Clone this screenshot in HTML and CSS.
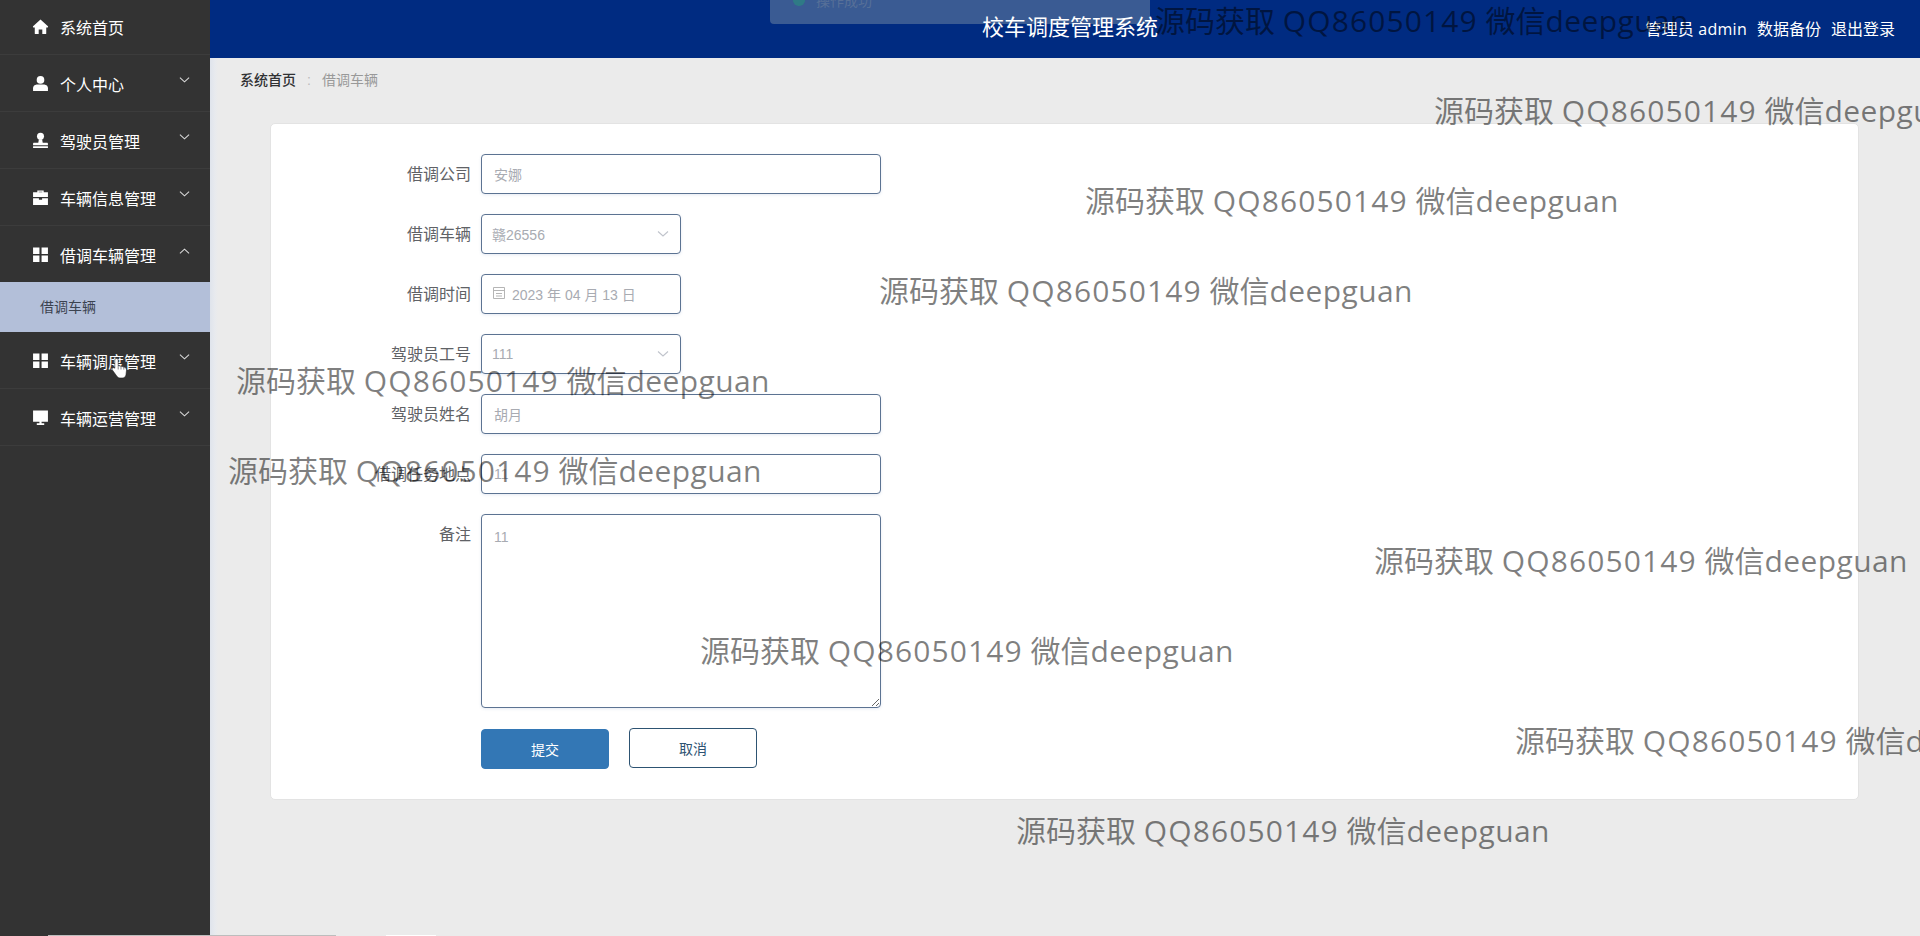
FILE: index.html
```html
<!DOCTYPE html>
<html lang="zh-CN">
<head>
<meta charset="utf-8">
<title>校车调度管理系统</title>
<link rel="stylesheet" href="styles.css">
</head>
<body>
<div class="app">
  <aside class="sidebar">
    <ul class="menu">
      <li class="menu-item">
        <svg class="menu-icon" viewBox="0 0 16 16"><path d="M8 1.500 1 7.800c-.4.5 0 1.200.6 1.200h1v5.500c0 .3.200.5.500.5h3.200v-4.200h3.400V15h3.200c.3 0 .5-.2.500-.5V9h1c.6 0 1-.7.6-1.200z"/></svg>
        <span class="menu-text">系统首页</span>
      </li>
      <li class="menu-item">
        <svg class="menu-icon" viewBox="0 0 16 16"><circle cx="8" cy="4.600" r="3.600"/><path d="M1 15v-2.600C1 10 3.400 9 5 9h6c1.600 0 4 1 4 3.400V15z"/></svg>
        <span class="menu-text">个人中心</span>
        <svg class="chevron" viewBox="0 0 12 8"><path d="M1 1.500 6 6l5-4.500"/></svg>
      </li>
      <li class="menu-item">
        <svg class="menu-icon" viewBox="0 0 16 16"><circle cx="8" cy="4" r="3.300"/><path d="M6.500 6.800h3l.6 3.200H14c.7 0 1 .5 1 1v1.500H1V11c0-.5.3-1 1-1h3.900zM1 13.500h14V15H1z"/></svg>
        <span class="menu-text">驾驶员管理</span>
        <svg class="chevron" viewBox="0 0 12 8"><path d="M1 1.500 6 6l5-4.500"/></svg>
      </li>
      <li class="menu-item">
        <svg class="menu-icon" viewBox="0 0 16 16"><path d="M5 3V1.500h6V3h4v4.500H1V3zm1.300 0h3.400v-.4H6.300zM1 8.700h5.500v1.300h3V8.700H15V15H1z"/></svg>
        <span class="menu-text">车辆信息管理</span>
        <svg class="chevron" viewBox="0 0 12 8"><path d="M1 1.500 6 6l5-4.500"/></svg>
      </li>
      <li class="menu-item">
        <svg class="menu-icon" viewBox="0 0 16 16"><path d="M1 1.500h6v6H1zM9 1.500h6v6H9zM1 9h6v6H1zM9 9h6v6H9z"/></svg>
        <span class="menu-text">借调车辆管理</span>
        <svg class="chevron" viewBox="0 0 12 8"><path d="M1 6.500 6 2l5 4.500"/></svg>
      </li>
      <li class="submenu-item">借调车辆</li>
      <li class="menu-item">
        <svg class="menu-icon" viewBox="0 0 16 16"><path d="M1 1.500h6v6H1zM9 1.500h6v6H9zM1 9h6v6H1zM9 9h6v6H9z"/></svg>
        <span class="menu-text">车辆调度管理</span>
        <svg class="chevron" viewBox="0 0 12 8"><path d="M1 1.500 6 6l5-4.500"/></svg>
      </li>
      <li class="menu-item">
        <svg class="menu-icon" viewBox="0 0 16 16"><path d="M1 1.500h14V12H9v1.300h2.500V15h-7v-1.700H7V12H1z"/></svg>
        <span class="menu-text">车辆运营管理</span>
        <svg class="chevron" viewBox="0 0 12 8"><path d="M1 1.500 6 6l5-4.500"/></svg>
      </li>
    </ul>
  </aside>

  <main class="main">
    <header class="topbar">
      <h1 class="title">校车调度管理系统</h1>
      <nav class="user-links">
        <span class="user-name">管理员 admin</span>
        <span>数据备份</span>
        <span>退出登录</span>
      </nav>
    </header>

    <div class="breadcrumb">
      <span class="crumb-home">系统首页</span>
      <span class="crumb-sep">:</span>
      <span class="crumb-current">借调车辆</span>
    </div>

    <form class="card">
      <div class="form-row">
        <label class="form-label">借调公司</label>
        <input class="control wide" value="安娜" readonly>
      </div>
      <div class="form-row">
        <label class="form-label">借调车辆</label>
        <div class="control narrow select"><span>赣26556</span><svg class="select-arrow" viewBox="0 0 12 8"><path d="M1 1.500 6 6l5-4.500"/></svg></div>
      </div>
      <div class="form-row">
        <label class="form-label">借调时间</label>
        <div class="control narrow date">
          <svg class="date-icon" viewBox="0 0 14 14"><path d="M1.500 1.500h11v11h-11zM1.500 4.500h11M4 7.500h6M4 10h6"/></svg>
          <span>2023 年 04 月 13 日</span>
        </div>
      </div>
      <div class="form-row">
        <label class="form-label">驾驶员工号</label>
        <div class="control narrow select"><span>111</span><svg class="select-arrow" viewBox="0 0 12 8"><path d="M1 1.500 6 6l5-4.500"/></svg></div>
      </div>
      <div class="form-row">
        <label class="form-label">驾驶员姓名</label>
        <input class="control wide" value="胡月" readonly>
      </div>
      <div class="form-row">
        <label class="form-label">借调任务地点</label>
        <input class="control wide" value="11" readonly>
      </div>
      <div class="form-row">
        <label class="form-label">备注</label>
        <textarea class="control wide note" readonly>11</textarea>
      </div>
      <div class="form-actions">
        <button type="button" class="btn btn-primary">提交</button>
        <button type="button" class="btn btn-ghost">取消</button>
      </div>
    </form>
  </main>
</div>

<div class="toast">
  <svg class="toast-icon" viewBox="0 0 16 16"><circle cx="8" cy="8" r="7"/></svg>
  <span>操作成功</span>
</div>

<svg class="hand-cursor" viewBox="0 0 18 22"><path d="M5.500 1.500c1 0 1.700.7 1.700 1.700v5.300l6 1.600c1.500.4 2.300 1.500 2.300 3l-.5 4.500c-.2 2-1.500 3.400-3.700 3.400H8.800c-1.200 0-2-.5-2.700-1.400L1.500 13.200c-.6-.8-.5-1.700.2-2.200.7-.5 1.500-.4 2.100.3V3.200c0-1 .7-1.700 1.700-1.700z"/><path class="hand-lines" d="M7.200 8.500v4M10 9.200v3.300M12.800 10v2.600"/></svg>

<div class="scroll-edge"><span class="scroll-thumb"></span><span class="scroll-mark"></span></div>

<div class="watermarks">
  <span class="wm wm-1">源码获取 <span class="wm-qq">QQ86050149</span> 微信<span class="wm-id">deepguan</span></span>
  <span class="wm wm-2">源码获取 <span class="wm-qq">QQ86050149</span> 微信<span class="wm-id">deepguan</span></span>
  <span class="wm wm-3">源码获取 <span class="wm-qq">QQ86050149</span> 微信<span class="wm-id">deepguan</span></span>
  <span class="wm wm-4">源码获取 <span class="wm-qq">QQ86050149</span> 微信<span class="wm-id">deepguan</span></span>
  <span class="wm wm-5">源码获取 <span class="wm-qq">QQ86050149</span> 微信<span class="wm-id">deepguan</span></span>
  <span class="wm wm-6">源码获取 <span class="wm-qq">QQ86050149</span> 微信<span class="wm-id">deepguan</span></span>
  <span class="wm wm-7">源码获取 <span class="wm-qq">QQ86050149</span> 微信<span class="wm-id">deepguan</span></span>
  <span class="wm wm-8">源码获取 <span class="wm-qq">QQ86050149</span> 微信<span class="wm-id">deepguan</span></span>
  <span class="wm wm-9">源码获取 <span class="wm-qq">QQ86050149</span> 微信<span class="wm-id">deepguan</span></span>
  <span class="wm wm-10">源码获取 <span class="wm-qq">QQ86050149</span> 微信<span class="wm-id">deepguan</span></span>
</div>
</body>
</html>
```
FILE: styles.css
```css
* { box-sizing: border-box; }
html, body { margin: 0; height: 100%; overflow: hidden; }
body {
  font-family: "Liberation Sans", "Noto Sans CJK SC", sans-serif;
  background: #ebebeb;
  color: #333;
}
.app { display: flex; height: 936px; }

/* sidebar */
.sidebar { width: 210px; flex: none; background: #333; overflow: hidden; }
.menu { list-style: none; margin: -2px 0 0; padding: 0; }
.menu-item {
  height: 57px;
  display: flex;
  align-items: center;
  padding: 2px 20px 0 32px;
  border-bottom: 1px solid #3c3c3c;
  color: #fff;
  font-size: 16px;
}
.menu-icon { width: 17px; height: 17px; fill: #fff; flex: none; margin-top: -2px; }
.menu-text { margin-left: 11px; flex: 1; }
.chevron { width: 11px; height: 8px; fill: none; stroke: #ddd; stroke-width: 1.100; margin-top: -8px; flex: none; }
.submenu-item {
  height: 50px;
  margin-top: -1px;
  line-height: 50px;
  padding-left: 40px;
  background: #b3bfd9;
  color: #3c4350;
  font-size: 14px;
}

/* main */
.main {
  flex: 1;
  min-width: 0;
  display: flex;
  flex-direction: column;
  background: linear-gradient(90deg, #dfe4ec 0, #e8eaee 5px, #ebebeb 8px);
}
.topbar {
  height: 58px;
  flex: none;
  display: flex;
  align-items: center;
  padding: 0 25px 0 772px;
  background: #002b81;
  color: #fff;
}
.title { position: relative; z-index: 1; margin: -2px 0 0; font-size: 22px; font-weight: 400; line-height: 1; }
.user-links {
  margin: -3px 0 0 auto;
  display: flex;
  gap: 10px;
  font-family: "Open Sans", "Noto Sans CJK SC", sans-serif;
  font-size: 16px;
}
.user-name { letter-spacing: .25px; }

.breadcrumb {
  height: 65px;
  flex: none;
  padding: 14px 0 0 30px;
  font-size: 14px;
  line-height: 16px;
  display: flex;
}
.crumb-home { color: #303133; font-weight: 500; }
.crumb-sep { margin-left: 11px; color: #bbb; }
.crumb-current { margin-left: 11px; color: #999; }

.card {
  width: 1589px;
  margin-left: 60px;
  padding: 30px 0;
  background: #fff;
  border: 1px solid #e3e3e3;
  border-radius: 5px;
  display: flex;
  flex-direction: column;
  gap: 20px;
}
.form-row { display: flex; align-items: flex-start; }
.form-label {
  width: 200px;
  height: 40px;
  margin-right: 10px;
  padding-top: 1px;
  text-align: right;
  font-size: 16px;
  line-height: 40px;
  color: #606266;
}
.control {
  height: 40px;
  padding: 0 12px;
  border: 1px solid #5c7392;
  border-radius: 4px;
  background: #fff;
  box-shadow: 0 1px 3px rgba(60, 90, 160, .12);
  font: 14px "Liberation Sans", "Noto Sans CJK SC", sans-serif;
  color: #a8abb2;
  outline: none;
}
.wide { width: 400px; }
.narrow { width: 200px; }
.select { display: flex; align-items: center; justify-content: space-between; padding: 0 10px; }
.select-arrow { width: 12px; height: 8px; fill: none; stroke: #c0c4cc; stroke-width: 1.100; margin-right: 1px; }
.date { display: flex; align-items: center; padding: 0 10px; }
.date-icon { width: 14px; height: 14px; fill: none; stroke: #b5b5b5; stroke-width: 1; margin: -3px 6px 0 0; flex: none; }
.note { height: 194px; padding: 14px 12px; display: block; }
.form-actions { display: flex; gap: 20px; padding-left: 210px; }
.btn {
  width: 128px;
  height: 40px;
  padding: 0;
  border-radius: 4px;
  font: 14px "Liberation Sans", "Noto Sans CJK SC", sans-serif;
}
.btn-primary { background: #3377b5; border: 1px solid #3377b5; color: #fff; margin-top: 1px; }
.btn-ghost { background: #fff; border: 1px solid #2d5372; color: #2d5372; }

/* overlays */
.toast {
  position: absolute;
  left: 770px;
  top: -24px;
  width: 380px;
  height: 48px;
  padding-left: 22px;
  display: flex;
  align-items: center;
  gap: 10px;
  background: #3a5b93;
  border-radius: 4px;
  color: #577098;
  font-size: 14px;
}
.toast-icon { width: 14px; height: 14px; fill: #2f7a86; flex: none; }
.hand-cursor {
  position: absolute;
  left: 111px;
  top: 357px;
  width: 18px;
  height: 22px;
  fill: #fff;
  stroke: #222;
  stroke-width: .6;
}
.hand-lines { fill: none; stroke: #555; stroke-width: .7; }
.scroll-edge {
  position: absolute;
  left: 0;
  bottom: 0;
  width: 100%;
  height: 1px;
  display: flex;
  padding-left: 48px;
  gap: 50px;
}
.scroll-thumb { width: 288px; background: #bdbdbd; }
.scroll-mark { width: 50px; background: #fff; }
.watermarks { position: absolute; inset: 0; overflow: hidden; pointer-events: none; }
.wm {
  position: absolute;
  white-space: nowrap;
  font-family: "Open Sans", "Noto Sans CJK SC", sans-serif;
  font-size: 30px;
  line-height: 40px;
  color: rgba(0, 0, 0, .5);
}
.wm-qq { letter-spacing: 1.100px; }
.wm-id { letter-spacing: .4px; }
.wm-1 { left: 1155px; top: 1px; }
.wm-2 { left: 1434px; top: 91px; }
.wm-3 { left: 1085px; top: 181px; }
.wm-4 { left: 879px; top: 271px; }
.wm-5 { left: 236px; top: 361px; }
.wm-6 { left: 228px; top: 451px; }
.wm-7 { left: 1374px; top: 541px; }
.wm-8 { left: 700px; top: 631px; }
.wm-9 { left: 1515px; top: 721px; }
.wm-10 { left: 1016px; top: 811px; }
```
